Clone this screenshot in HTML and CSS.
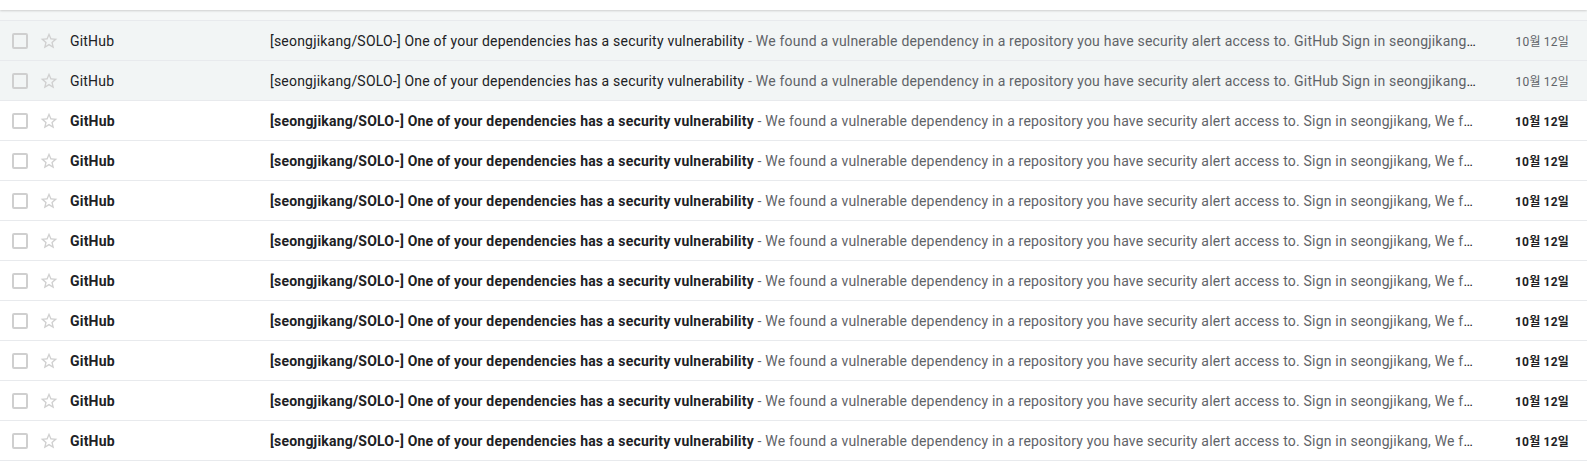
FILE: index.html
```html
<!DOCTYPE html>
<html lang="ko">
<head>
<meta charset="utf-8">
<title>Inbox</title>
<link rel="stylesheet" href="styles.css">
</head>
<body>
<div class="toolbar"></div>
<div class="gap"></div>
<div class="list" id="list"></div>
<script>
var rows = [];
for (var i = 0; i < 11; i++) rows.push(i < 2 ? 'read' : 'unread');
var list = document.getElementById('list');
var star = '<svg viewBox="0 0 24 24" width="20" height="20"><path d="M22 9.24l-7.19-.62L12 2 9.19 8.63 2 9.24l5.46 4.73L5.82 21 12 17.27 18.18 21l-1.63-7.03L22 9.24zM12 15.4l-3.76 2.27 1-4.28-3.32-2.88 4.38-.38L12 6.1l1.71 4.04 4.38.38-3.32 2.88 1 4.28L12 15.4z" fill="currentColor"/></svg>';
rows.forEach(function (state) {
  var snippet = state === 'read'
    ? ' - We found a vulnerable dependency in a repository you have security alert access to. GitHub Sign in seongjikang, We found a vulnerable dependency in a repository'
    : ' - We found a vulnerable dependency in a repository you have security alert access to. Sign in seongjikang, We found a vulnerable dependency in a repository';
  var row = document.createElement('div');
  row.className = 'row ' + state;
  row.innerHTML =
    '<span class="check"></span>' +
    '<span class="star">' + star + '</span>' +
    '<span class="sender">GitHub</span>' +
    '<span class="content"><span class="subject">[seongjikang/SOLO-] One of your dependencies has a security vulnerability</span><span class="snippet">' + snippet + '</span></span>' +
    '<span class="date">10월 12일</span>';
  list.appendChild(row);
});
</script>
</body>
</html>
```
FILE: styles.css
```css
html, body {
  margin: 0;
  padding: 0;
  background: #fff;
}
body {
  font-family: Roboto, "Noto Sans CJK KR", "Liberation Sans", sans-serif;
  font-size: 14px;
  color: #202124;
  overflow: hidden;
}
.toolbar {
  height: 10px;
  background: #fff;
  box-shadow: 0 1px 2px rgba(0, 0, 0, 0.16);
  position: relative;
  z-index: 1;
}
.gap {
  height: 10px;
  background: #f5f7f7;
  border-bottom: 1px solid #e8eaed;
}
.row {
  display: flex;
  align-items: center;
  height: 39px;
  border-bottom: 1px solid #e8eaed;
  background: #fff;
  white-space: nowrap;
}
.row.read {
  background: #f2f5f5;
}
.check {
  flex: none;
  width: 12px;
  height: 12px;
  margin-left: 12px;
  border: 2px solid #cfcfcf;
  border-radius: 2px;
}
.star {
  flex: none;
  display: flex;
  margin-left: 11px;
  color: #d0d0d0;
  width: 20px;
  height: 20px;
}
.sender {
  flex: none;
  width: 200px;
  margin-left: 11px;
  letter-spacing: 0.2px;
}
.content {
  flex: 1;
  min-width: 0;
  overflow: hidden;
  text-overflow: ellipsis;
  letter-spacing: 0.2px;
}
.snippet {
  color: #5f6368;
}
.date {
  flex: none;
  width: 92px;
  margin-right: 18px;
  text-align: right;
  font-size: 12px;
  letter-spacing: 0.2px;
  color: #5f6368;
}
.unread .sender,
.unread .subject,
.unread .date {
  font-weight: bold;
  color: #202124;
}
```
